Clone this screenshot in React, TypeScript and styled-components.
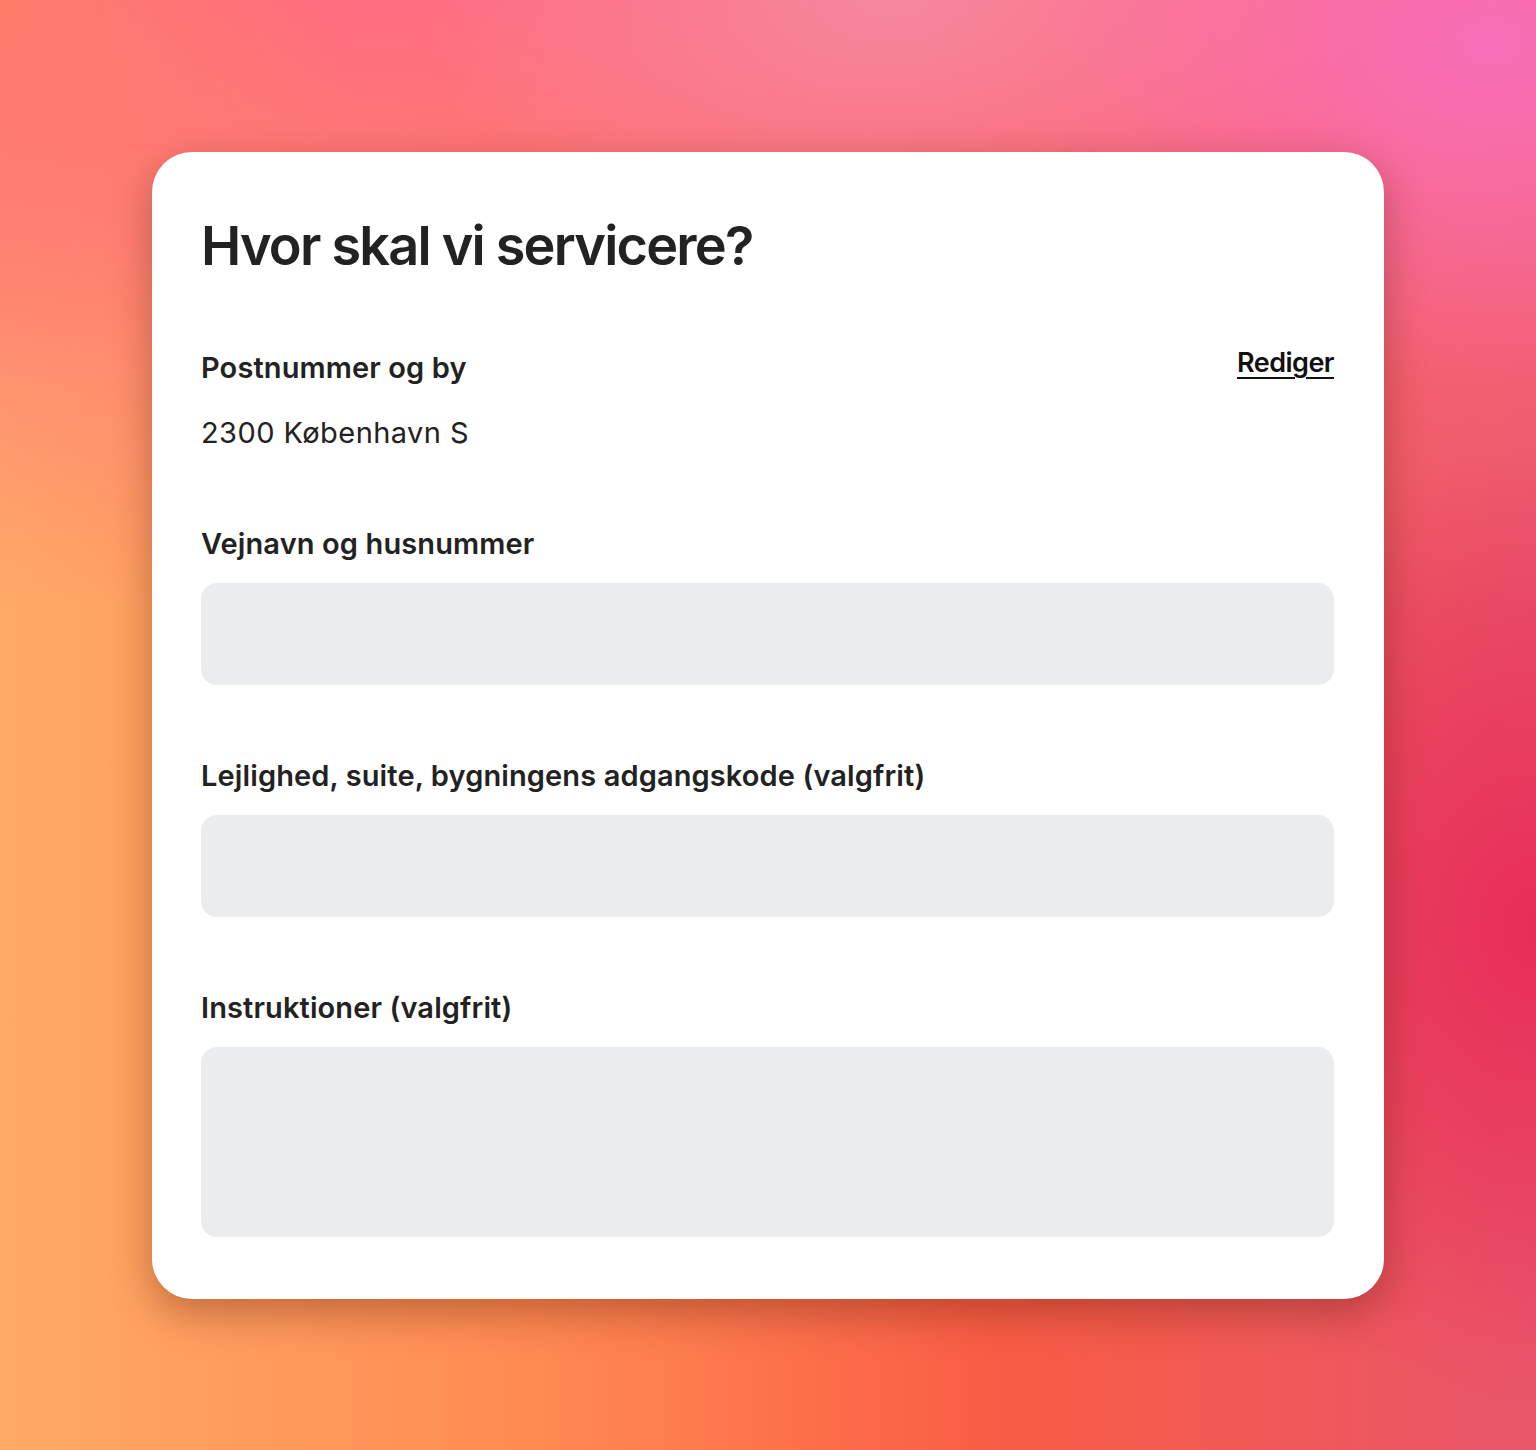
import styled, { createGlobalStyle } from "styled-components";

const GlobalStyle = createGlobalStyle`
  html, body {
    margin: 0;
    padding: 0;
  }
  body {
    font-family: Inter, "Noto Sans", "Liberation Sans", sans-serif;
    color: #222222;
  }
`;

const Backdrop = styled.main`
  width: 1536px;
  height: 1450px;
  box-sizing: border-box;
  padding: 152px 152px 0 152px;
  background:
    radial-gradient(ellipse 480px 520px at 0% 0%, rgba(255, 124, 106, 1), rgba(255, 124, 106, 0) 75%),
    radial-gradient(ellipse 520px 640px at 100% 64%, rgba(232, 44, 88, 1), rgba(232, 44, 88, 0) 75%),
    radial-gradient(ellipse 620px 460px at 97% 3%, rgba(247, 110, 184, 1), rgba(247, 110, 184, 0) 75%),
    radial-gradient(ellipse 640px 360px at 58% 0%, rgba(244, 138, 162, 0.9), rgba(244, 138, 162, 0) 75%),
    linear-gradient(to bottom, rgba(255, 108, 128, 1) 0%, rgba(255, 108, 128, 0) 42%),
    linear-gradient(90deg, #ffaa66 0%, #ff8a52 35%, #f95c44 65%, #e8566a 100%);
`;

const Card = styled.section`
  width: 1232px;
  box-sizing: border-box;
  padding: 60px 50px 62px 49px;
  background: #ffffff;
  border-radius: 40px;
  box-shadow: 0 14px 40px rgba(90, 30, 10, 0.38);
`;

const Title = styled.h1`
  margin: 0 0 70px;
  font-size: 54px;
  line-height: 68px;
  font-weight: 600;
  letter-spacing: -0.033em;
  color: #222222;
`;

const HeaderRow = styled.div`
  display: flex;
  justify-content: space-between;
  align-items: flex-start;
`;

const Label = styled.div`
  font-size: 29px;
  line-height: 36px;
  font-weight: 600;
  letter-spacing: 0.004em;
  color: #222222;
`;

const EditLink = styled.a`
  font-size: 27px;
  line-height: 26px;
  font-weight: 600;
  letter-spacing: -0.02em;
  color: #111111;
  text-decoration: underline;
  text-underline-offset: 5px;
  text-decoration-thickness: 2px;
  cursor: pointer;
`;

const Value = styled.div`
  margin-top: 29px;
  font-size: 29px;
  line-height: 36px;
  font-weight: 400;
  letter-spacing: 0.015em;
  color: #222222;
`;

const Field = styled.div<{ $gap: number }>`
  display: flex;
  flex-direction: column;
  gap: 21px;
  margin-top: ${(p) => p.$gap}px;
`;

const Input = styled.div<{ $tall?: boolean }>`
  height: ${(p) => (p.$tall ? 190 : 102)}px;
  background: #ebecee;
  border-radius: 16px;
`;

const fields = [
  { label: "Vejnavn og husnummer", gap: 75, tall: false },
  { label: "Lejlighed, suite, bygningens adgangskode (valgfrit)", gap: 73, tall: false },
  { label: "Instruktioner (valgfrit)", gap: 73, tall: true },
];

const App = () => {
  return (
    <>
      <GlobalStyle />
      <Backdrop>
        <Card>
          <Title>Hvor skal vi servicere?</Title>
          <HeaderRow>
            <Label>Postnummer og by</Label>
            <EditLink>Rediger</EditLink>
          </HeaderRow>
          <Value>2300 København S</Value>
          {fields.map((f) => (
            <Field key={f.label} $gap={f.gap}>
              <Label>{f.label}</Label>
              <Input $tall={f.tall} />
            </Field>
          ))}
        </Card>
      </Backdrop>
    </>
  );
};

export default App;
